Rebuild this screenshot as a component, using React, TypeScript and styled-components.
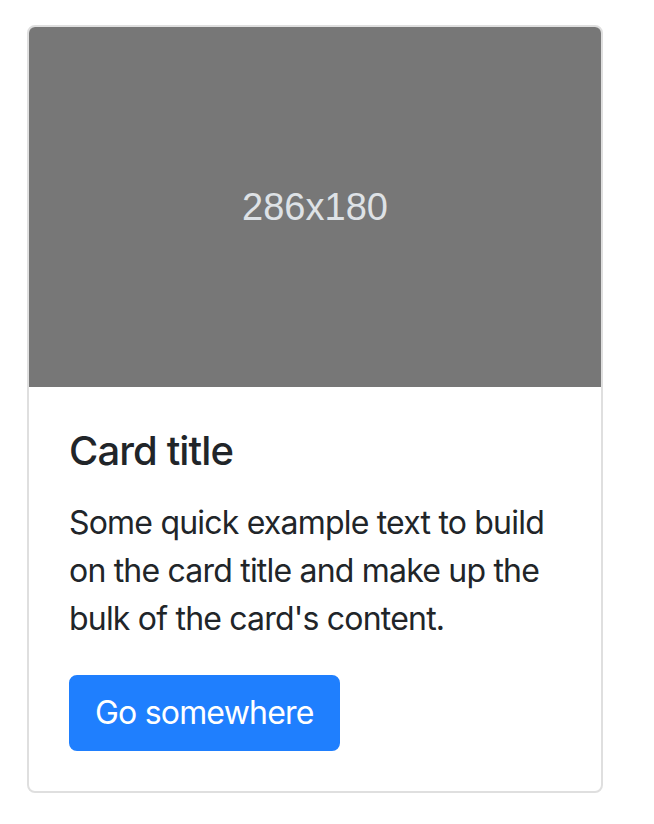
import React from "react";
import styled, { createGlobalStyle } from "styled-components";

const Global = createGlobalStyle`
  html, body { margin: 0; padding: 0; background: #fff; }
  body { font-family: Inter, "Noto Sans", sans-serif; color: #212529; }
  * { box-sizing: border-box; }
`;

const Page = styled.div`
  padding: 25px 0 0 27px;
`;

const Card = styled.div`
  width: 576px;
  border: 2px solid #dfdfdf;
  border-radius: 8px;
  overflow: hidden;
  display: flex;
  flex-direction: column;
  background: #fff;
`;

const Placeholder = styled.svg`
  display: block;
  width: 572px;
  height: 360px;
`;

const Body = styled.div`
  padding: 40px;
`;

const Title = styled.h5`
  margin: 0 0 24px;
  font-size: 40px;
  font-weight: 500;
  line-height: 48px;
  letter-spacing: -0.9px;
`;

const Text = styled.p`
  margin: 0 0 32px;
  font-size: 32px;
  line-height: 48px;
  letter-spacing: -0.8px;
`;

const Button = styled.a`
  display: inline-block;
  padding: 12px 24px;
  border: 2px solid #1f7ffe;
  border-radius: 8px;
  background: #1f7ffe;
  color: #fff;
  font-size: 32px;
  line-height: 48px;
  letter-spacing: -0.8px;
  text-decoration: none;
`;

export default function App() {
  return (
    <>
      <Global />
      <Page>
        <Card>
          <Placeholder viewBox="0 0 572 360" xmlns="http://www.w3.org/2000/svg">
            <rect width="572" height="360" fill="#777777" />
            <text
              x="286"
              y="183"
              fill="#dee2e6"
              textAnchor="middle"
              dominantBaseline="middle"
              fontFamily="'Liberation Sans', Arial, sans-serif"
              fontSize="38"
            >
              286x180
            </text>
          </Placeholder>
          <Body>
            <Title>Card title</Title>
            <Text>
              Some quick example text to build on the card title and make up the bulk of the card's content.
            </Text>
            <Button href="#">Go somewhere</Button>
          </Body>
        </Card>
      </Page>
    </>
  );
}
